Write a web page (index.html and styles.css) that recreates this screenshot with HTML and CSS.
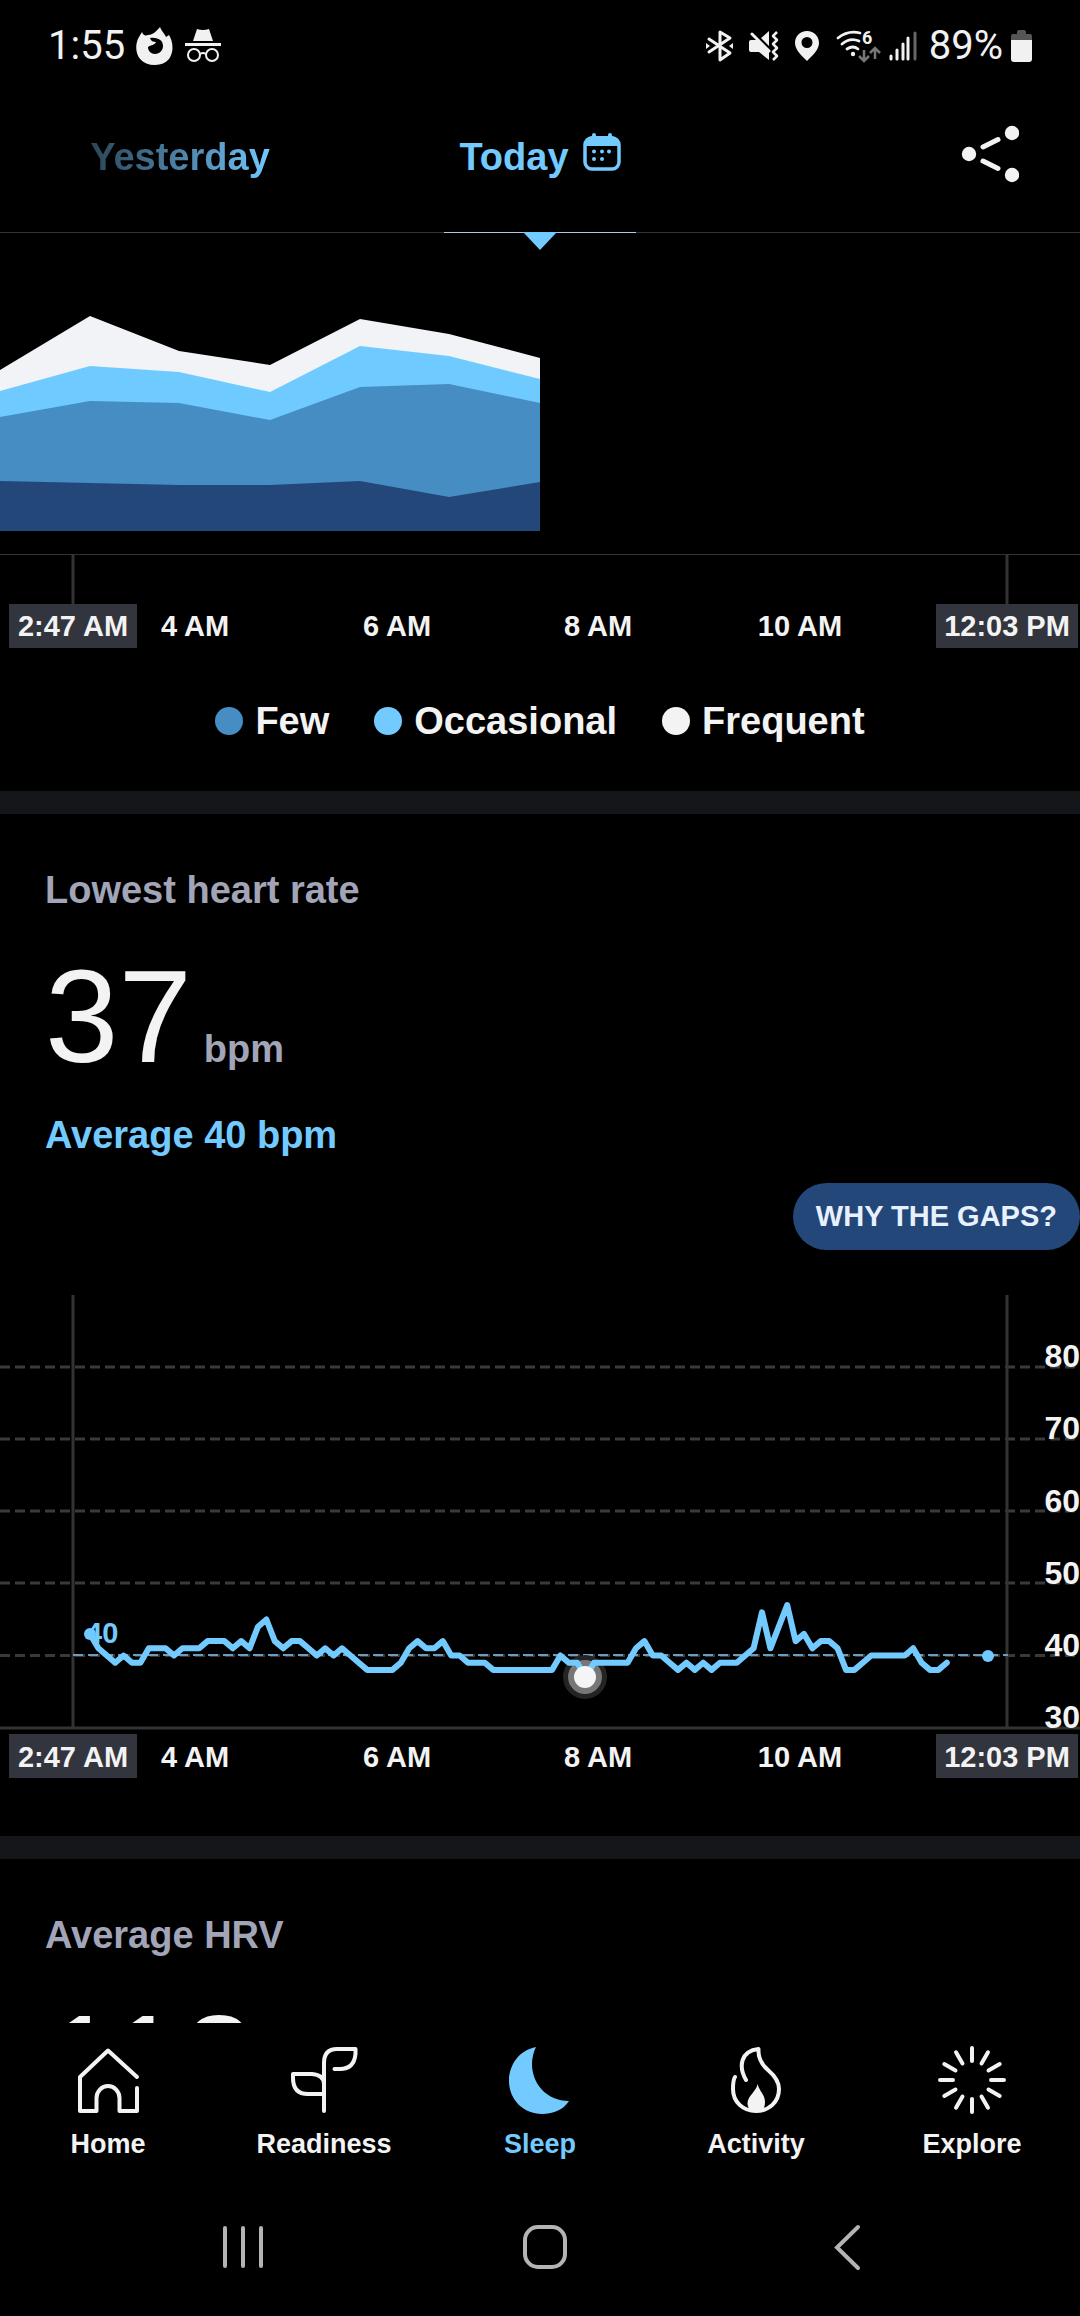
FILE: index.html
```html
<!DOCTYPE html>
<html lang="en">
<head>
<meta charset="utf-8">
<meta name="viewport" content="width=device-width, initial-scale=1">
<title>Sleep</title>
<link rel="stylesheet" href="styles.css">
</head>
<body>
<div class="app">
  <div class="status">
    <div class="status-left">
      <span>1:55</span>
      <svg width="38" height="38" viewBox="0 0 38 38"><path fill="#f1f1f1" fill-rule="evenodd" d="M6 5C7 8 9 9 12 8C16 8 20 5 24 0C26 5 29 7 30 10L33 8C39 17 39 38 19 38C0 38-3 20 3 10ZM14 11C15 14 17 15 20 15C19 18 15 18 12 20C12 24 15 27 19 27C24 27 27 23 27 19C27 14 23 10 14 11Z"/></svg>
      <svg width="36" height="36" viewBox="0 0 36 36"><path fill="#f1f1f1" d="M8 13L12 1Q18 3 24 1L28 13ZM0 15H36V18H0Z"/><g fill="none" stroke="#f1f1f1" stroke-width="2"><circle cx="9" cy="27" r="6"/><circle cx="27" cy="27" r="6"/><path d="M15 26Q18 24 21 26"/></g></svg>
    </div>
    <div class="status-right">
      <svg width="35" height="36" viewBox="0 0 35 36"><path fill="none" stroke="#f1f1f1" stroke-width="3" stroke-linecap="round" stroke-linejoin="round" d="M3 11L24 25L14 32V4L24 10L3 24"/><path fill="#f1f1f1" d="M0 15L4 18L0 21ZM27 15L23 18L27 21Z"/></svg>
      <svg width="38" height="36" viewBox="0 0 38 36"><path fill="#f1f1f1" d="M2 12H8L20 24V32L10 24H2Q0 24 0 22V14Q0 12 2 12ZM12 10L20 3V18Z"/><path fill="none" stroke="#f1f1f1" stroke-width="3" stroke-linecap="round" stroke-linejoin="round" d="M3 6L20 23"/><path fill="none" stroke="#f1f1f1" stroke-width="2.5" stroke-linejoin="round" d="M28 4L24 8L28 12L24 16L28 20L24 24L28 28L24 32"/></svg>
      <svg width="33" height="36" viewBox="0 0 33 36"><path fill="#f1f1f1" fill-rule="evenodd" d="M12 3C5 3 0 8 0 15C0 22 7 28 12 33C17 28 24 22 24 15C24 8 19 3 12 3ZM12 9A5.5 5.5 0 1 1 12 20A5.5 5.5 0 1 1 12 9Z"/></svg>
      <svg width="45" height="36" viewBox="0 0 45 36"><g fill="none" stroke="#f1f1f1" stroke-width="2.8" stroke-linecap="round"><path d="M2 10Q12 2 24 5"/><path d="M6 16Q14 9 23 13"/><path d="M11 21Q17 17 22 21"/></g><circle cx="17" cy="26" r="2.2" fill="#f1f1f1"/><text class="wifi-gen" x="26" y="16">6</text><path fill="none" stroke="#777" stroke-width="2.5" d="M28 22V33M23 28L28 33L33 28M39 31V20M34 25L39 20L44 25"/></svg>
      <svg width="32" height="36" viewBox="0 0 32 36"><g stroke="#f1f1f1" stroke-width="3" stroke-linecap="round"><path d="M2 28V31M8 22V31M14 16V31M19 10V31"/><path stroke="#666" d="M26 5V31"/></g></svg>
      <span>89%</span>
      <svg width="22" height="36" viewBox="0 0 22 36"><path fill="#555" d="M6 4Q6 2 8 2H13Q15 2 15 4V6H19Q21 6 21 8V14H0V8Q0 6 2 6H6Z"/><path fill="#f1f1f1" d="M0 12H21V31Q21 34 18 34H3Q0 34 0 31Z"/></svg>
    </div>
  </div>

  <header class="header">
    <button class="day day-prev" type="button">Yesterday</button>
    <button class="day day-current" type="button">Today
      <svg width="38" height="48" viewBox="0 0 38 48"><rect x="2" y="5" width="34" height="31" rx="7" fill="none" stroke="currentColor" stroke-width="3.5"/><path fill="currentColor" d="M1 13Q1 4 9 3V2Q9 0 11 0T13 2V3H25V2Q25 0 27 0T29 2V3Q37 4 37 13Z"/><g fill="currentColor"><circle cx="11" cy="18.500" r="2"/><circle cx="19" cy="18.500" r="2"/><circle cx="26" cy="18.500" r="2"/><circle cx="11" cy="26" r="2"/><circle cx="19" cy="26" r="2"/></g></svg>
    </button>
    <button class="share" type="button" aria-label="Share">
      <svg width="58" height="64" viewBox="0 0 58 64"><g fill="#f3f3f3"><circle cx="8" cy="29" r="7.200"/><circle cx="51" cy="8" r="7.200"/><circle cx="51" cy="50" r="7.200"/></g><path stroke="#f3f3f3" stroke-width="5" stroke-linecap="round" d="M22 22L37 14.500M22 36L37 43.500"/></svg>
    </button>
  </header>

  <main class="content">
    <section>
      <svg class="chart" viewBox="0 0 1080 427" role="img" aria-label="Movement during the night">
        <polygon fill="#f1f3f6" points="0,137 90,83 179,118 270,132 360,86 449,101 540,125 540,298 0,298"/>
        <polygon fill="#6fcbff" points="0,158 90,133 179,139 270,159 360,113 449,123 540,146 540,298 0,298"/>
        <polygon fill="#458dc3" points="0,184 90,168 179,170 270,187 360,154 449,151 540,170 540,298 0,298"/>
        <polygon fill="#234779" points="0,248 90,250 179,252 270,252 360,248 449,264 540,249 540,298 0,298"/>
        <path class="axis-thin" d="M0 321.500H1080"/>
        <path class="axis" d="M73 322V371M1007 322V371"/>
        <rect class="time-box" x="9" y="371" width="128" height="44"/>
        <rect class="time-box" x="936" y="371" width="142" height="44"/>
        <g class="tick">
          <text x="73" y="403">2:47 AM</text>
          <text x="195" y="403">4 AM</text>
          <text x="397" y="403">6 AM</text>
          <text x="598" y="403">8 AM</text>
          <text x="800" y="403">10 AM</text>
          <text x="1007" y="403">12:03 PM</text>
        </g>
      </svg>
      <ul class="legend">
        <li><span class="dot dot-few"></span>Few</li>
        <li><span class="dot dot-occasional"></span>Occasional</li>
        <li><span class="dot dot-frequent"></span>Frequent</li>
      </ul>
    </section>

    <section class="card">
      <h2 class="title">Lowest heart rate</h2>
      <p class="value">37<span class="unit">bpm</span></p>
      <p class="average">Average 40 bpm</p>
      <button class="pill" type="button">WHY THE GAPS?</button>
      <svg class="chart" viewBox="0 0 1080 586" role="img" aria-label="Heart rate during the night">
        <path class="grid" d="M0 117H1080M0 189H1080M0 261H1080M0 333H1080M0 405.500H1080"/>
        <path class="axis" d="M0 478H1080M73 45V478M1007 45V478"/>
        <path class="mean" d="M73 405H1008"/>
        <g class="scale">
          <text x="1080" y="117">80</text>
          <text x="1080" y="189">70</text>
          <text x="1080" y="262">60</text>
          <text x="1080" y="334">50</text>
          <text x="1080" y="406">40</text>
          <text x="1080" y="478">30</text>
        </g>
        <text class="mean-label" x="86" y="393">40</text>
        <circle cx="585" cy="427" r="22" fill="#242424"/>
        <circle cx="585" cy="427" r="17" fill="#777"/>
        <polyline class="pulse" transform="translate(90 693.500) scale(8.400 -7.200)" points="0,43 1,41 2,40 3,39 4,40 5,39 6,39 7,41 8,41 9,41 10,40 11,41 12,41 13,41 14,42 15,42 16,42 17,41 18,42 19,41 20,44 21,45 22,42 23,41 24,42 25,42 26,41 27,40 28,41 29,40 30,41 31,40 32,39 33,38 36,38 37,39 38,41 39,42 40,41 41,41 42,42 43,40 44,40 45,39 47,39 48,38 55,38 56,40 57,39 58,39 59,37 60,39 64,39 65,41 66,42 67,40 68,40 69,39 70,38 71,39 72,38 73,39 74,38 75,39 77,39 78,40 79,41 80,46 81,41 82,44 83,47 84,42 85,43 86,41 87,42 88,42 89,41 90,38 91,38 92,39 93,40 97,40 98,41 99,39 100,38 101,38 102,39"/>
        <circle cx="90" cy="384" r="6" fill="#6fcbff"/>
        <circle cx="988" cy="406" r="6" fill="#6fcbff"/>
        <circle cx="585" cy="427" r="11" fill="#f3f5f6"/>
        <rect class="time-box" x="9" y="484" width="128" height="44"/>
        <rect class="time-box" x="936" y="484" width="142" height="44"/>
        <g class="tick">
          <text x="73" y="517">2:47 AM</text>
          <text x="195" y="517">4 AM</text>
          <text x="397" y="517">6 AM</text>
          <text x="598" y="517">8 AM</text>
          <text x="800" y="517">10 AM</text>
          <text x="1007" y="517">12:03 PM</text>
        </g>
      </svg>
    </section>

    <section class="card">
      <h2 class="title">Average HRV</h2>
      <p class="value">112</p>
    </section>
  </main>

  <nav class="tabs">
    <a class="tab" href="#home">
      <svg viewBox="0 0 72 72"><path d="M65 33L36 6.500L8 33V67H24.500V54a11.500 12 0 0 1 23 0V67H65V44"/></svg>Home</a>
    <a class="tab" href="#readiness">
      <svg viewBox="0 0 72 72"><path d="M36 67V19Q36 5 49 5H67.500V10Q66 25 52 25H46.500M36 50H20Q5 50 5 34V30H24Q36 31 36 40"/></svg>Readiness</a>
    <a class="tab tab-active" href="#sleep" aria-current="page">
      <svg viewBox="0 0 72 72"><path class="solid" d="M32 3C16 6 5 20 5 37C5 56 20 70 38 70C50 70 60 65 65 57C43 57 28 40 28 20C28 13 30 7 32 3Z"/></svg>Sleep</a>
    <a class="tab" href="#activity">
      <svg viewBox="0 0 72 72"><path d="M26 36C18 22 21 7 38.500 5C38 14 41 20 48 26C55 32 59 38 59 45C59 58 49 67 36 67C23 67 13 58 13 45C13 40 13 36 15 33"/><path class="solid" d="M37.500 40C37 47 27 52 27.500 60C28 65 31 68 36 68C42 68 45 65 45 58C45 51 40 48 37.500 40Z"/></svg>Activity</a>
    <a class="tab" href="#explore">
      <svg viewBox="0 0 72 72"><path d="M36 4V17M36 55V68M4 36H17M55 36H68M20 8.300L26.500 19.500M52 8.300L45.500 19.500M20 63.700L26.500 52.500M52 63.700L45.500 52.500M8.300 20L19.500 26.500M63.700 20L52.500 26.500M8.300 52L19.500 45.500M63.700 52L52.500 45.500"/></svg>Explore</a>
  </nav>

  <div class="system">
    <button type="button" aria-label="Recent apps"><svg width="48" height="48" viewBox="0 0 48 48"><path d="M6 5V43M24 5V43M42 5V43"/></svg></button>
    <button type="button" aria-label="Home screen"><svg width="48" height="48" viewBox="0 0 48 48"><rect x="4" y="4" width="40" height="40" rx="13"/></svg></button>
    <button type="button" aria-label="Back"><svg width="48" height="48" viewBox="0 0 48 48"><path d="M35 4L14 24.500L35 45"/></svg></button>
  </div>
</div>
</body>
</html>
```
FILE: styles.css
```css
* { box-sizing: border-box; }

body {
  margin: 0;
  background: #000;
  color: #f3f3f3;
  font-family: "Liberation Sans", Arial, sans-serif;
  font-size: 38px;
  line-height: 44px;
  font-weight: 700;
}

h2, p, ul { margin: 0; padding: 0; font-size: inherit; font-weight: inherit; }

button {
  padding: 0;
  border: 0;
  background: none;
  color: inherit;
  font: inherit;
}

svg { display: block; flex: none; }

.app { display: flex; flex-direction: column; height: 100vh; }

/* Status bar */
.status {
  display: flex;
  justify-content: space-between;
  padding: 22px 47px 12px 48px;
  font: 400 40px/48px Roboto, sans-serif;
  color: #f1f1f1;
}
.status-left, .status-right { display: flex; align-items: center; }
.status-left { gap: 11px; }
.status-right { gap: 8px; }
.wifi-gen { font: 700 18px Roboto, sans-serif; fill: #f1f1f1; }

/* Day switcher */
.header {
  display: grid;
  grid-template-columns: repeat(3, 1fr);
  height: 151px;
  border-bottom: 1px solid #333;
  color: #73caff;
}
.day-prev {
  justify-self: center;
  background: linear-gradient(90deg, #2b4558, #5c9bc8 70%, #73caff);
  -webkit-background-clip: text;
  background-clip: text;
  color: transparent;
}
.day-current {
  position: relative;
  display: flex;
  justify-self: center;
  justify-content: center;
  align-items: center;
  gap: 14px;
  width: 192px;
}
.day-current::before {
  content: "";
  position: absolute;
  right: 0;
  bottom: -1px;
  left: 0;
  height: 1px;
  background: #a9cbe6;
}
.day-current::after {
  content: "";
  position: absolute;
  top: 100%;
  left: 50%;
  width: 34px;
  height: 18px;
  margin-left: -17px;
  background: #73caff;
  clip-path: polygon(0 0, 100% 0, 50% 100%);
}
.share { justify-self: end; margin-right: 61px; }

/* Scrolling content */
.content { flex: 1; min-height: 0; overflow: hidden; }
.chart { width: 100%; height: auto; }

.axis { fill: none; stroke: #333; stroke-width: 3; }
.axis-thin { stroke: #333; stroke-width: 1; }
.grid { fill: none; stroke: #3a3a3a; stroke-width: 3; stroke-dasharray: 10 5; }
.mean { stroke: #6a9dc0; stroke-width: 2; stroke-dasharray: 10 5; }
.time-box { fill: #32353d; }
.tick text { font-size: 29px; text-anchor: middle; fill: #f3f3f3; }
.scale text { font-size: 32px; text-anchor: end; fill: #f3f3f3; }
.mean-label { font-size: 29px; fill: #73caff; }
.pulse {
  fill: none;
  stroke: #73caff;
  stroke-width: 6;
  stroke-linecap: round;
  stroke-linejoin: round;
  vector-effect: non-scaling-stroke;
}

.legend {
  display: flex;
  justify-content: center;
  gap: 45px;
  padding: 39px 0 48px;
  list-style: none;
}
.legend li { display: flex; align-items: center; gap: 12px; }
.dot { width: 28px; height: 28px; border-radius: 50%; }
.dot-few { background: #458dc3; }
.dot-occasional { background: #73caff; }
.dot-frequent { background: #f3f3f3; }

.card {
  display: flex;
  flex-direction: column;
  border-top: 23px solid #14161a;
  padding-top: 54px;
}
.title, .value, .average { margin-left: 45px; }
.title { color: #a1a5b7; }
.value {
  margin-top: 39px;
  font-size: 132px;
  line-height: 132px;
  font-weight: 400;
}
.unit {
  margin-left: 12px;
  font-size: 38px;
  line-height: 44px;
  font-weight: 700;
  color: #a1a5b7;
}
.average { margin-top: 30px; color: #73caff; }
.pill {
  align-self: flex-end;
  margin-top: 26px;
  padding: 0 23px;
  border-radius: 34px;
  background: #234779;
  color: #e8f1ff;
  font-size: 29px;
  line-height: 67px;
}

/* Bottom navigation */
.tabs {
  display: grid;
  grid-template-columns: repeat(5, 1fr);
  padding: 21px 0 36px;
}
.tab {
  display: flex;
  flex-direction: column;
  align-items: center;
  gap: 12px;
  color: #f3f3f3;
  font-size: 27px;
  line-height: 32px;
  text-decoration: none;
}
.tab svg {
  width: 72px;
  height: 72px;
  fill: none;
  stroke: currentColor;
  stroke-width: 4;
  stroke-linecap: round;
  stroke-linejoin: round;
}
.tab .solid { fill: currentColor; stroke: none; }
.tab-active { color: #73caff; }

.system {
  display: grid;
  grid-template-columns: repeat(3, 1fr);
  justify-items: center;
  padding: 27px 82px 45px 92px;
}
.system svg {
  fill: none;
  stroke: #b4b4b4;
  stroke-width: 4;
  stroke-linecap: round;
}
```
